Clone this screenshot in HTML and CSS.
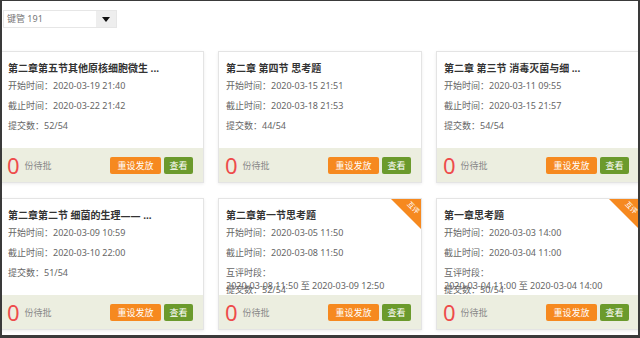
FILE: index.html
```html
<!DOCTYPE html>
<html lang="zh-CN">
<head>
<meta charset="UTF-8">
<meta name="viewport" content="width=device-width,initial-scale=1">
<title>作业列表</title>
<link rel="stylesheet" href="styles.css">
</head>
<body>
<div class="frame">
  <div class="toolbar">
    <div class="select">
      <span class="select-text">键管 191</span>
      <span class="select-btn"><span class="caret"></span></span>
    </div>
  </div>

  <div class="grid">
    <!-- row 1 -->
    <div class="card">
      <div class="card-body">
        <h3 class="title">第二章第五节其他原核细胞微生 ...</h3>
        <p>开始时间：2020-03-19 21:40</p>
        <p>截止时间：2020-03-22 21:42</p>
        <p>提交数：52/54</p>
      </div>
      <div class="card-foot">
        <span class="count">0</span><span class="wait">份待批</span>
        <span class="btn btn-reset">重设发放</span><span class="btn btn-view">查看</span>
      </div>
    </div>

    <div class="card">
      <div class="card-body">
        <h3 class="title">第二章 第四节 思考题</h3>
        <p>开始时间：2020-03-15 21:51</p>
        <p>截止时间：2020-03-18 21:53</p>
        <p>提交数：44/54</p>
      </div>
      <div class="card-foot">
        <span class="count">0</span><span class="wait">份待批</span>
        <span class="btn btn-reset">重设发放</span><span class="btn btn-view">查看</span>
      </div>
    </div>

    <div class="card">
      <div class="card-body">
        <h3 class="title">第二章 第三节 消毒灭菌与细 ...</h3>
        <p>开始时间：2020-03-11 09:55</p>
        <p>截止时间：2020-03-15 21:57</p>
        <p>提交数：54/54</p>
      </div>
      <div class="card-foot">
        <span class="count">0</span><span class="wait">份待批</span>
        <span class="btn btn-reset">重设发放</span><span class="btn btn-view">查看</span>
      </div>
    </div>

    <!-- row 2 -->
    <div class="card">
      <div class="card-body">
        <h3 class="title">第二章第二节 细菌的生理—— ...</h3>
        <p>开始时间：2020-03-09 10:59</p>
        <p>截止时间：2020-03-10 22:00</p>
        <p>提交数：51/54</p>
      </div>
      <div class="card-foot">
        <span class="count">0</span><span class="wait">份待批</span>
        <span class="btn btn-reset">重设发放</span><span class="btn btn-view">查看</span>
      </div>
    </div>

    <div class="card">
      <div class="ribbon"><span>互评</span></div>
      <div class="card-body">
        <h3 class="title">第二章第一节思考题</h3>
        <p>开始时间：2020-03-05 11:50</p>
        <p>截止时间：2020-03-08 11:50</p>
        <p class="peer">互评时段：<br>2020-03-08 11:50 至 2020-03-09 12:50</p>
        <p>提交数：52/54</p>
      </div>
      <div class="card-foot">
        <span class="count">0</span><span class="wait">份待批</span>
        <span class="btn btn-reset">重设发放</span><span class="btn btn-view">查看</span>
      </div>
    </div>

    <div class="card">
      <div class="ribbon"><span>互评</span></div>
      <div class="card-body">
        <h3 class="title">第一章思考题</h3>
        <p>开始时间：2020-03-03 14:00</p>
        <p>截止时间：2020-03-04 11:00</p>
        <p class="peer">互评时段：<br>2020-03-04 11:00 至 2020-03-04 14:00</p>
        <p>提交数：50/54</p>
      </div>
      <div class="card-foot">
        <span class="count">0</span><span class="wait">份待批</span>
        <span class="btn btn-reset">重设发放</span><span class="btn btn-view">查看</span>
      </div>
    </div>
  </div>
</div>
</body>
</html>
```

FILE: styles.css
```css
body {
  margin: 0;
  font-family: "Noto Sans", "Noto Sans CJK SC", sans-serif;
  background: #fff;
}

/* screenshot frame */
.frame {
  box-sizing: border-box;
  width: 640px;
  height: 338px;
  border: 2px solid #3a3a3a;
  border-top-width: 1px;
  border-bottom-width: 3px;
  overflow: hidden;
  background: #fff;
}

/* class selector */
.toolbar {
  padding: 9px 0 0 1px;
}
.select {
  display: flex;
  width: 114px;
  height: 18px;
  box-sizing: border-box;
  border: 1px solid #e6e6e6;
}
.select-text {
  flex: 1;
  padding-left: 3px;
  font-size: 9px;
  line-height: 16px;
  color: #777;
}
.select-btn {
  width: 20px;
  background: #eee;
  display: flex;
  align-items: center;
  justify-content: center;
}
.caret {
  width: 0;
  height: 0;
  border-left: 4px solid transparent;
  border-right: 4px solid transparent;
  border-top: 5px solid #111;
}

/* cards */
.grid {
  display: grid;
  grid-template-columns: repeat(3, 204px);
  column-gap: 14px;
  row-gap: 15px;
  margin: 23px 0 0 -2px;
}

.card {
  position: relative;
  height: 132px;
  box-sizing: border-box;
  border: 1px solid #e4e4e4;
  box-shadow: 0 1px 3px rgba(0,0,0,0.08);
  background: #fff;
  display: flex;
  flex-direction: column;
}

.card-body {
  height: 96px;
  padding: 8px 7px 0;
  box-sizing: border-box;
}
.title {
  margin: 0;
  height: 16px;
  line-height: 16px;
  font-size: 10px;
  font-weight: bold;
  color: #333;
  white-space: nowrap;
}
.card-body p {
  margin: 0;
  height: 20px;
  line-height: 20px;
  font-size: 9px;
  color: #666;
  white-space: nowrap;
}
.card-body p.peer {
  margin-top: 3px;
  height: 14px;
  line-height: 13px;
}

.card-foot {
  flex: 1;
  display: flex;
  align-items: center;
  padding: 0 10px 0 6px;
  background: #eceee0;
}
.count {
  font-size: 22px;
  line-height: 1;
  color: #ee4b4b;
}
.wait {
  margin-left: 5px;
  font-size: 9px;
  color: #888;
}
.btn {
  height: 17px;
  line-height: 17px;
  font-size: 9px;
  color: #fff;
  text-align: center;
  border-radius: 2px;
}
.btn-reset {
  width: 51px;
  margin-left: auto;
  background: #f6891f;
}
.btn-view {
  width: 29px;
  margin-left: 3px;
  background: #6b9a2c;
}

/* peer review corner mark */
.ribbon {
  position: absolute;
  top: 0;
  right: 0;
  width: 30px;
  height: 30px;
  background: #f6891f;
  clip-path: polygon(0 0, 100% 0, 100% 100%);
}
.ribbon span {
  position: absolute;
  top: 5px;
  right: 1px;
  font-size: 7px;
  line-height: 8px;
  color: #fff;
  transform: rotate(45deg);
}
```
